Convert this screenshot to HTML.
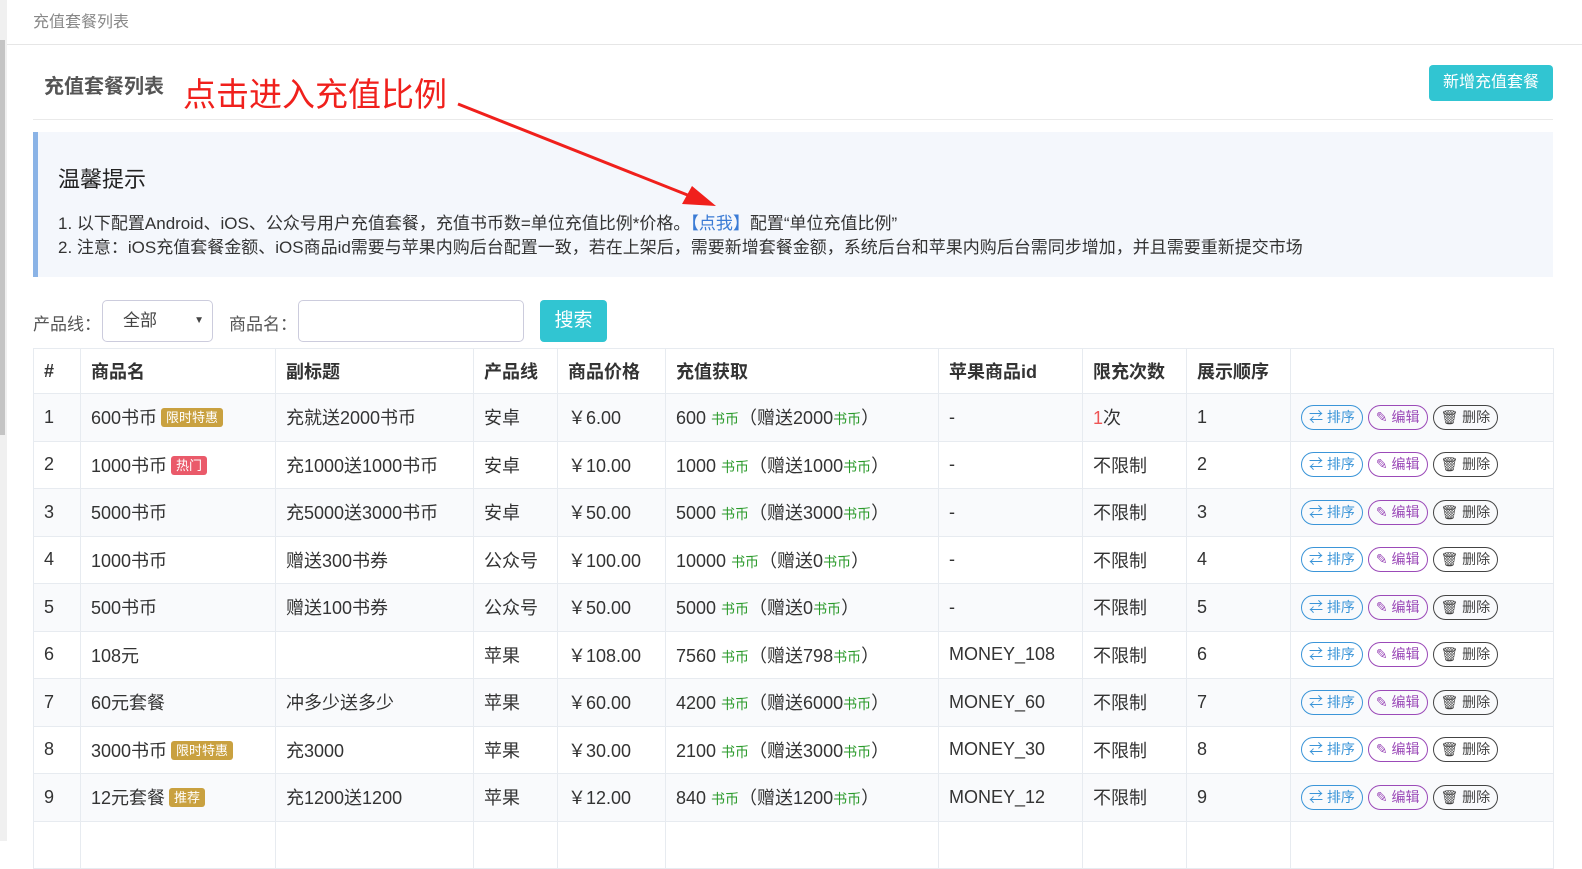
<!DOCTYPE html>
<html><head><meta charset="utf-8"><style>
*{box-sizing:border-box;margin:0;padding:0}
body{width:1582px;height:841px;overflow:hidden;background:#fff;font-family:"Liberation Sans","Noto Sans CJK SC",sans-serif;color:#333;position:relative}
.abs{position:absolute}
table{border-collapse:collapse;table-layout:fixed;position:absolute;left:33px;top:348px;width:1520px}
td,th{border:1px solid #e7ebf0;font-size:18px;text-align:left;padding:0 10px;height:47.5px;white-space:nowrap;overflow:hidden}
th{height:45px;font-weight:bold}
tbody tr:nth-child(odd){background:#f9fafc}
.tag{display:inline-block;font-size:13px;color:#fff;padding:1px 5px;border-radius:3px;line-height:17px;vertical-align:2px;margin-left:4px}
.g{font-size:14px;color:#2a9a2a}
.b{display:inline-block;height:25px;line-height:23px;border-radius:13px;border:1px solid;font-size:14px;padding:0 7px;margin-right:5px;vertical-align:middle}
.b1{color:#3b95d8;border-color:#3b95d8}.b2{color:#9b4ab8;border-color:#9b4ab8}.b3{color:#444;border-color:#444}
</style></head><body>
<div class="abs" style="left:0;top:0;width:7px;height:841px;background:#f0f0f0"></div>
<div class="abs" style="left:0;top:40px;width:5px;height:395px;background:#c4c4c4"></div>
<div class="abs" style="left:33px;top:8px;font-size:16px;color:#888">充值套餐列表</div>
<div class="abs" style="left:7px;top:44px;width:1575px;height:1px;background:#e6e6e6"></div>
<div class="abs" style="left:44px;top:70px;font-size:20px;font-weight:bold;color:#555">充值套餐列表</div>
<div class="abs" style="left:183px;top:68px;font-size:33px;color:#f0201c">点击进入充值比例</div>
<div class="abs" style="left:1429px;top:65px;width:124px;height:36px;background:#31c5d2;border-radius:4px;color:#fff;font-size:16px;text-align:center;line-height:36px">新增充值套餐</div>
<div class="abs" style="left:33px;top:119px;width:1520px;height:1px;background:#eaeaea"></div>
<div class="abs" style="left:33px;top:132px;width:1520px;height:145px;background:#f4f7fc;border-left:5px solid #8ab3e6"></div>
<div class="abs" style="left:58px;top:162px;font-size:22px;color:#222">温馨提示</div>
<div class="abs" style="left:58px;top:212px;font-size:17px;line-height:24px;color:#333">1. 以下配置Android、iOS、公众号用户充值套餐，充值书币数=单位充值比例*价格。<span style="color:#3a7bd5">【点我】</span>配置“单位充值比例”<br>2. 注意：iOS充值套餐金额、iOS商品id需要与苹果内购后台配置一致，若在上架后，需要新增套餐金额，系统后台和苹果内购后台需同步增加，并且需要重新提交市场</div>
<svg class="abs" style="left:0;top:0" width="1582" height="300"><line x1="458" y1="104" x2="690" y2="196" stroke="#f0201c" stroke-width="3"/><polygon points="716,206 682,204 692,186" fill="#f0201c"/></svg>
<div class="abs" style="left:33px;top:310px;font-size:17px;color:#555">产品线：</div>
<div class="abs" style="left:102px;top:300px;width:111px;height:42px;border:1px solid #ccd;border-radius:5px;font-size:17px;line-height:40px;padding-left:20px;color:#444">全部<span style="position:absolute;right:8px;font-size:10px">▼</span></div>
<div class="abs" style="left:229px;top:310px;font-size:17px;color:#555">商品名：</div>
<div class="abs" style="left:298px;top:300px;width:226px;height:42px;border:1px solid #ccd;border-radius:5px"></div>
<div class="abs" style="left:540px;top:300px;width:67px;height:42px;background:#31c5d2;border-radius:4px;color:#fff;font-size:19px;text-align:center;line-height:42px">搜索</div>
<table>
<colgroup><col style="width:47px"><col style="width:195px"><col style="width:198px"><col style="width:84px"><col style="width:108px"><col style="width:273px"><col style="width:144px"><col style="width:104px"><col style="width:104px"><col style="width:263px"></colgroup>
<thead><tr><th>#</th><th>商品名</th><th>副标题</th><th>产品线</th><th>商品价格</th><th>充值获取</th><th>苹果商品id</th><th>限充次数</th><th>展示顺序</th><th></th></tr></thead>
<tbody>
<tr><td>1</td><td>600书币<span class="tag" style="background:#c9a140">限时特惠</span></td><td>充就送2000书币</td><td>安卓</td><td>￥6.00</td><td>600 <span class="g">书币</span>（赠送2000<span class="g">书币</span>）</td><td>-</td><td><span style="color:#e55">1</span>次</td><td>1</td><td><span class="b b1">⇄ 排序</span><span class="b b2">✎ 编辑</span><span class="b b3">🗑 删除</span></td></tr>
<tr><td>2</td><td>1000书币<span class="tag" style="background:#ea5a6a">热门</span></td><td>充1000送1000书币</td><td>安卓</td><td>￥10.00</td><td>1000 <span class="g">书币</span>（赠送1000<span class="g">书币</span>）</td><td>-</td><td>不限制</td><td>2</td><td><span class="b b1">⇄ 排序</span><span class="b b2">✎ 编辑</span><span class="b b3">🗑 删除</span></td></tr>
<tr><td>3</td><td>5000书币</td><td>充5000送3000书币</td><td>安卓</td><td>￥50.00</td><td>5000 <span class="g">书币</span>（赠送3000<span class="g">书币</span>）</td><td>-</td><td>不限制</td><td>3</td><td><span class="b b1">⇄ 排序</span><span class="b b2">✎ 编辑</span><span class="b b3">🗑 删除</span></td></tr>
<tr><td>4</td><td>1000书币</td><td>赠送300书券</td><td>公众号</td><td>￥100.00</td><td>10000 <span class="g">书币</span>（赠送0<span class="g">书币</span>）</td><td>-</td><td>不限制</td><td>4</td><td><span class="b b1">⇄ 排序</span><span class="b b2">✎ 编辑</span><span class="b b3">🗑 删除</span></td></tr>
<tr><td>5</td><td>500书币</td><td>赠送100书券</td><td>公众号</td><td>￥50.00</td><td>5000 <span class="g">书币</span>（赠送0<span class="g">书币</span>）</td><td>-</td><td>不限制</td><td>5</td><td><span class="b b1">⇄ 排序</span><span class="b b2">✎ 编辑</span><span class="b b3">🗑 删除</span></td></tr>
<tr><td>6</td><td>108元</td><td></td><td>苹果</td><td>￥108.00</td><td>7560 <span class="g">书币</span>（赠送798<span class="g">书币</span>）</td><td>MONEY_108</td><td>不限制</td><td>6</td><td><span class="b b1">⇄ 排序</span><span class="b b2">✎ 编辑</span><span class="b b3">🗑 删除</span></td></tr>
<tr><td>7</td><td>60元套餐</td><td>冲多少送多少</td><td>苹果</td><td>￥60.00</td><td>4200 <span class="g">书币</span>（赠送6000<span class="g">书币</span>）</td><td>MONEY_60</td><td>不限制</td><td>7</td><td><span class="b b1">⇄ 排序</span><span class="b b2">✎ 编辑</span><span class="b b3">🗑 删除</span></td></tr>
<tr><td>8</td><td>3000书币<span class="tag" style="background:#c9a140">限时特惠</span></td><td>充3000</td><td>苹果</td><td>￥30.00</td><td>2100 <span class="g">书币</span>（赠送3000<span class="g">书币</span>）</td><td>MONEY_30</td><td>不限制</td><td>8</td><td><span class="b b1">⇄ 排序</span><span class="b b2">✎ 编辑</span><span class="b b3">🗑 删除</span></td></tr>
<tr><td>9</td><td>12元套餐<span class="tag" style="background:#c9a140">推荐</span></td><td>充1200送1200</td><td>苹果</td><td>￥12.00</td><td>840 <span class="g">书币</span>（赠送1200<span class="g">书币</span>）</td><td>MONEY_12</td><td>不限制</td><td>9</td><td><span class="b b1">⇄ 排序</span><span class="b b2">✎ 编辑</span><span class="b b3">🗑 删除</span></td></tr>
<tr><td>&nbsp;</td><td></td><td></td><td></td><td></td><td></td><td></td><td></td><td></td><td></td></tr>
</tbody></table>
</body></html>
